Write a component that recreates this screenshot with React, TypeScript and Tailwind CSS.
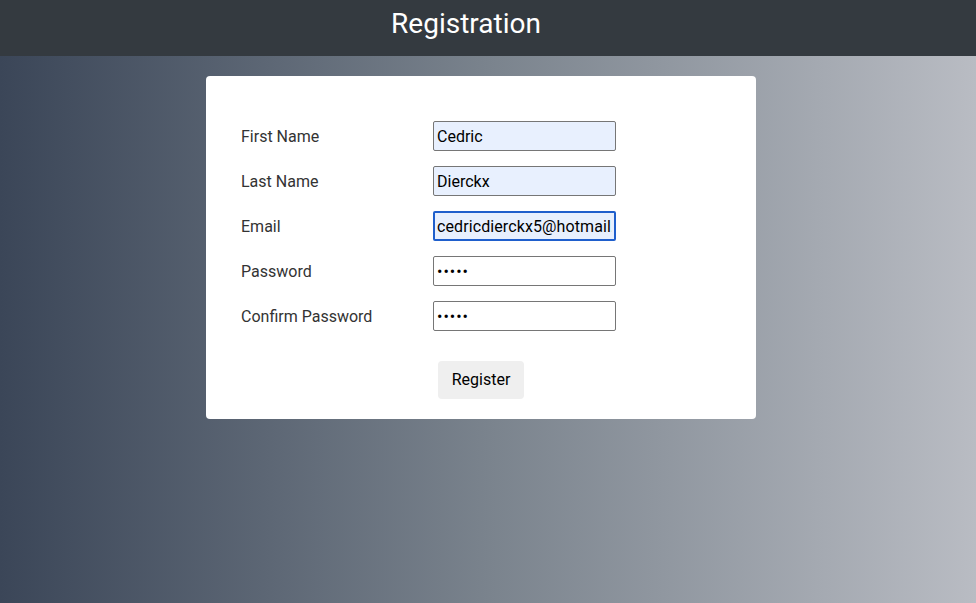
import React from 'react';

interface Field {
  label: string;
  type: string;
  value: string;
  autofill?: boolean;
  focused?: boolean;
}

const fields: Field[] = [
  { label: 'First Name', type: 'text', value: 'Cedric', autofill: true },
  { label: 'Last Name', type: 'text', value: 'Dierckx', autofill: true },
  { label: 'Email', type: 'email', value: 'cedricdierckx5@hotmail.com', autofill: true, focused: true },
  { label: 'Password', type: 'password', value: '12345' },
  { label: 'Confirm Password', type: 'password', value: '12345' },
];

const App: React.FC = () => {
  return (
    <div className="min-h-[603px] flex flex-col bg-gradient-to-r from-[#3b4658] via-[#7a838d] to-[#b9bcc3] font-['Roboto',sans-serif]">
      <header className="h-14 bg-[#343a40] flex items-center justify-center pr-[44px] pb-[9px]">
        <h1 className="text-[28px] text-white leading-none">Registration</h1>
      </header>

      <div className="ml-[206px] mt-5 w-[550px] bg-white rounded-[4px] pt-[45px] pb-5 pl-[35px]">
        <div className="flex flex-col gap-[15px]">
          {fields.map((f) => (
            <div key={f.label} className="flex items-center">
              <label className="w-[192px] text-base text-[#333] pt-[2px]">{f.label}</label>
              <input
                type={f.type}
                value={f.value}
                readOnly
                className={
                  f.focused
                    ? 'w-[183px] h-[30px] px-[2px] text-base text-black bg-[#e8f0fe] border-2 border-[#1f5fcc] rounded-[2px] outline-none tracking-[0.1px]'
                    : f.autofill
                    ? 'w-[183px] h-[30px] px-[3px] text-base text-black bg-[#e8f0fe] border border-[#767676] rounded-[2px] outline-none'
                    : 'w-[183px] h-[30px] px-[3px] text-base text-black bg-white border border-[#767676] rounded-[2px] outline-none tracking-[1px]'
                }
              />
            </div>
          ))}
        </div>
        <div className="flex justify-center mt-[30px] pr-[35px]">
          <button className="h-[38px] px-[14px] bg-[#efefef] rounded-[4px] text-base text-black">Register</button>
        </div>
      </div>
    </div>
  );
};

export default App;
